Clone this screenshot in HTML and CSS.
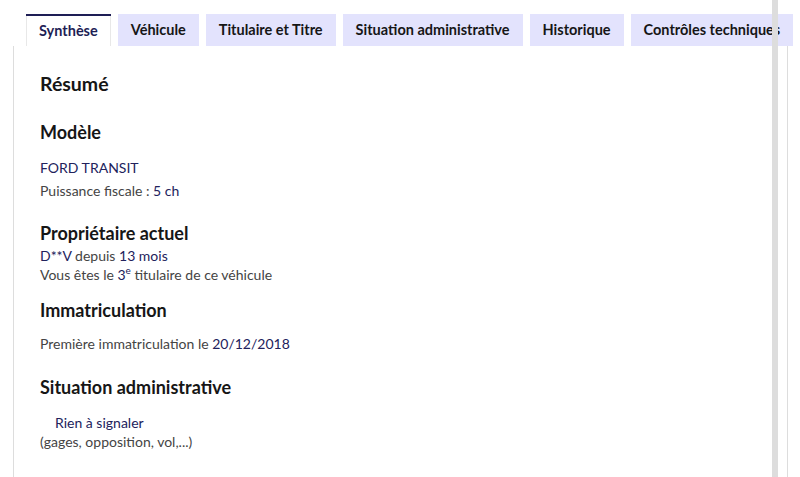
FILE: index.html
```html
<!DOCTYPE html>
<html lang="fr">

<head>
    <meta charset="UTF-8">
    <meta name="viewport" content="width=device-width, initial-scale=1.0">
    <title>Historique du véhicule</title>
    <link rel="stylesheet" href="styles.css">
</head>

<body>
    <div class="page">
        <ul class="tabs">
            <li class="tab active">Synthèse</li>
            <li class="tab">Véhicule</li>
            <li class="tab">Titulaire et Titre</li>
            <li class="tab">Situation administrative</li>
            <li class="tab">Historique</li>
            <li class="tab">Contrôles techniques</li>
        </ul>

        <div class="panel">
            <h2 class="title">Résumé</h2>

            <h3>Modèle</h3>
            <p class="value model">FORD TRANSIT</p>
            <p>Puissance fiscale : <span class="value">5 ch</span></p>

            <h3 class="owner">Propriétaire actuel</h3>
            <p class="line"><span class="value">D**V</span> depuis <span class="value">13 mois</span></p>
            <p class="line">Vous êtes le <span class="value">3<sup>e</sup></span> titulaire de ce véhicule</p>

            <h3 class="immat">Immatriculation</h3>
            <p class="date">Première immatriculation le <span class="value">20/12/2018</span></p>

            <h3 class="admin">Situation administrative</h3>
            <p class="line status"><span class="value">Rien à signaler</span></p>
            <p class="line">(gages, opposition, vol,...)</p>
        </div>

        <!-- scroll bar -->
        <div class="scroll"></div>
    </div>
</body>

</html>
```

FILE: styles.css
```css
/* Page */

body {
    font-family: Lato, "Open Sans", Arial, sans-serif;
    margin: 0;
    padding: 0;
    background: white;
    color: #444;
    overflow: hidden;
}

.page {
    position: relative;
    padding: 14px 12px 0 13px;
    height: 477px;
    box-sizing: border-box;
}

/* Tabs */

.tabs {
    list-style: none;
    margin: 0 0 0 13px;
    padding: 0;
    display: flex;
    gap: 7px;
    white-space: nowrap;
}

.tab {
    height: 32px;
    line-height: 32px;
    padding: 0 13px;
    background: #e3e3fd;
    color: #161616;
    font-weight: bold;
    font-size: 14.5px;
}

.tab.active {
    background: white;
    color: #1e1e55;
    border-top: 2px solid #1e1e55;
    box-shadow: inset 1px 0 0 #e8e8e8, inset -1px 0 0 #e8e8e8;
    height: 30px;
    line-height: 30px;
}

/* Panel */

.panel {
    border-left: 1px solid #ddd;
    border-right: 1px solid #ddd;
    padding: 20px 26px 0 26px;
    height: 431px;
    box-sizing: border-box;
    font-size: 14px;
}

h2,
h3 {
    color: #161616;
    font-weight: bold;
    margin: 0;
}

.title {
    font-size: 19.5px;
    line-height: 36px;
    margin-bottom: 14px;
}

h3 {
    font-size: 18px;
    line-height: 32px;
}

p {
    margin: 0;
    line-height: 23px;
}

p.line {
    line-height: 19px;
}

/* Spacing between blocks */

.model {
    margin-top: 8px;
}

.owner {
    margin-top: 18px;
    line-height: 26px;
}

.immat {
    margin-top: 10px;
}

.date {
    margin-top: 6px;
}

.admin {
    margin-top: 16px;
}

.status {
    margin-top: 10px;
    padding-left: 15px;
}

.value {
    color: #22225c;
}

sup {
    font-size: 10px;
    line-height: 0;
}

.scroll {
    position: absolute;
    top: 0;
    left: 772px;
    width: 6px;
    height: 100%;
    background: #dddddd;
}
```
